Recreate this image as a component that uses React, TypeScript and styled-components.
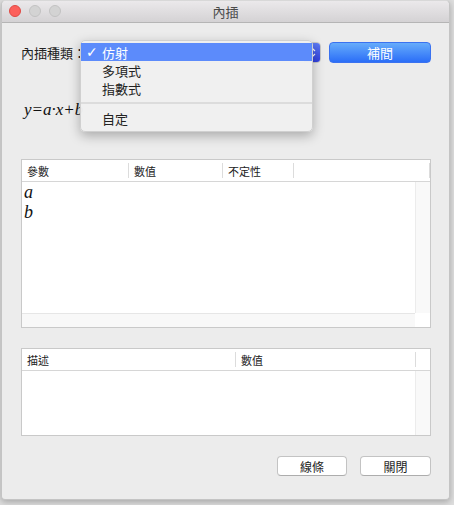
import React from "react";
import styled, { createGlobalStyle } from "styled-components";

const Global = createGlobalStyle`
  html, body { margin: 0; padding: 0; }
  body {
    background: #dedede;
    width: 454px;
    height: 505px;
    overflow: hidden;
    font-family: "Noto Sans CJK TC", "Noto Sans", sans-serif;
  }
`;

const CJK = `"Noto Sans CJK TC", "Noto Sans", sans-serif`;

const Window = styled.div`
  margin: 0 0 0 1px;
  width: 449px;
  height: 500px;
  box-sizing: border-box;
  background: #ececec;
  border: 1px solid #c4c4c4;
  border-top-color: #d8d8d8;
  border-radius: 5px 5px 4px 4px;
  box-shadow: 0 2px 6px rgba(0, 0, 0, 0.25);
  display: flex;
  flex-direction: column;
  overflow: hidden;
`;

const TitleBar = styled.div`
  height: 22px;
  flex: none;
  box-sizing: border-box;
  background: linear-gradient(#ebe9eb, #d4d2d4);
  border-bottom: 1px solid #b5b5b5;
  position: relative;
  display: flex;
  align-items: center;
  justify-content: center;
  font-family: ${CJK};
  font-size: 13px;
  color: #4a4a4a;
`;

const Lights = styled.div`
  position: absolute;
  left: 7px;
  top: 4px;
  display: flex;
  gap: 8px;
`;

const Light = styled.span<{ $color: string; $border: string }>`
  width: 12px;
  height: 12px;
  border-radius: 50%;
  box-sizing: border-box;
  background: ${(p) => p.$color};
  border: 1px solid ${(p) => p.$border};
`;

const Content = styled.div`
  flex: 1;
  display: flex;
  flex-direction: column;
  padding: 19px 18px 0 19px;
`;

const TopRow = styled.div`
  position: relative;
  display: flex;
  align-items: center;
  height: 21px;
`;

const Label = styled.span`
  width: 65px;
  font-family: ${CJK};
  font-size: 13px;
  color: #222;
  white-space: nowrap;
`;

const Popup = styled.div`
  flex: 1;
  height: 21px;
  box-sizing: border-box;
  background: #fff;
  border-radius: 4px;
  border: 1px solid #c8c8c8;
  display: flex;
  justify-content: flex-end;
  overflow: hidden;
`;

const PopupCap = styled.div`
  width: 16px;
  background: linear-gradient(#5d7bf4, #3140e0);
  display: flex;
  align-items: center;
  justify-content: center;
`;

const BlueButton = styled.button`
  margin-left: 8px;
  width: 102px;
  height: 21px;
  border: 1px solid #3a72f0;
  border-radius: 4px;
  background: linear-gradient(#66acfb, #2b6ef7);
  color: #fff;
  font-family: ${CJK};
  font-size: 13px;
  padding: 0;
`;

const Menu = styled.div`
  position: absolute;
  left: 59px;
  top: -2px;
  width: 233px;
  box-sizing: border-box;
  padding: 2px 0 4px;
  background: rgba(240, 240, 240, 0.98);
  border: 1px solid #d0d0d0;
  border-radius: 5px;
  box-shadow: 0 4px 12px rgba(0, 0, 0, 0.28);
  z-index: 2;
`;

const MenuItem = styled.div<{ $active?: boolean }>`
  position: relative;
  height: 18px;
  padding-left: 21px;
  display: flex;
  align-items: center;
  font-family: ${CJK};
  font-size: 13px;
  color: ${(p) => (p.$active ? "#fff" : "#222")};
  background: ${(p) => (p.$active ? "#5c8bfb" : "transparent")};
`;

const Check = styled.span`
  position: absolute;
  left: 5px;
  font-family: "DejaVu Sans", sans-serif;
  font-size: 14px;
  font-weight: bold;
`;

const Separator = styled.div`
  height: 2px;
  margin: 5px 0;
  background: #dcdcdc;
`;

const Formula = styled.div`
  margin-top: 36px;
  padding-left: 3px;
  height: 22px;
  line-height: 22px;
  font-family: "Liberation Serif", serif;
  font-style: italic;
  font-size: 17px;
  color: #111;
`;

const Spacer = styled.div<{ $h: number }>`
  height: ${(p) => p.$h}px;
  flex: none;
`;

const Table = styled.div<{ $height: number }>`
  height: ${(p) => p.$height}px;
  flex: none;
  box-sizing: border-box;
  border: 1px solid #c9c9c9;
  background: #fff;
  display: flex;
  flex-direction: column;
`;

const Header = styled.div`
  height: 22px;
  flex: none;
  box-sizing: border-box;
  border-bottom: 1px solid #d6d6d6;
  display: flex;
  background: #fff;
`;

const HeadCell = styled.div<{ $w?: number; $last?: boolean }>`
  ${(p) => (p.$w ? `width: ${p.$w}px;` : "flex: 1;")}
  flex-shrink: 0;
  box-sizing: border-box;
  padding-left: 5px;
  display: flex;
  align-items: center;
  font-family: ${CJK};
  font-size: 11px;
  color: #222;
  position: relative;
  &::after {
    content: "";
    position: absolute;
    right: 0;
    top: 3px;
    bottom: 3px;
    width: 1px;
    background: ${(p) => (p.$last ? "transparent" : "#dcdcdc")};
  }
`;

const Body = styled.div<{ $hscroll?: boolean }>`
  flex: 1;
  display: grid;
  grid-template-columns: 1fr 15px;
  grid-template-rows: ${(p) => (p.$hscroll ? "1fr 14px" : "1fr")};
  min-height: 0;
`;

const Rows = styled.div`
  display: flex;
  flex-direction: column;
`;

const Row = styled.div`
  height: 20px;
  padding-left: 2px;
  display: flex;
  align-items: center;
  font-family: "Liberation Serif", serif;
  font-style: italic;
  font-size: 18px;
  color: #111;
`;

const VTrack = styled.div`
  background: #f9f9f9;
  border-left: 1px solid #ececec;
`;

const HTrack = styled.div`
  background: #f8f8f8;
  border-top: 1px solid #e6e6e6;
`;

const Corner = styled.div`
  background: #fff;
`;

const Footer = styled.div`
  margin-top: 20px;
  display: flex;
  justify-content: flex-end;
  gap: 13px;
`;

const PlainButton = styled.button<{ $w: number }>`
  width: ${(p) => p.$w}px;
  height: 20px;
  padding: 0;
  background: #fff;
  border: 1px solid #c3c3c3;
  border-bottom-color: #adadad;
  border-radius: 4px;
  font-family: ${CJK};
  font-size: 12px;
  color: #222;
`;

const Chevrons = () => (
  <svg width="7" height="11" viewBox="0 0 7 11">
    <path d="M1 4 L3.5 1.5 L6 4 M1 7 L3.5 9.5 L6 7" stroke="#fff" strokeWidth="1.2" fill="none" />
  </svg>
);

export default function App() {
  return (
    <>
      <Global />
      <Window>
        <TitleBar>
          <Lights>
            <Light $color="#fc605b" $border="#de4a45" />
            <Light $color="#d3d3d3" $border="#c2c2c2" />
            <Light $color="#d3d3d3" $border="#c2c2c2" />
          </Lights>
          內插
        </TitleBar>
        <Content>
          <TopRow>
            <Label>內插種類：</Label>
            <Popup>
              <PopupCap>
                <Chevrons />
              </PopupCap>
            </Popup>
            <BlueButton>補間</BlueButton>
            <Menu>
              <MenuItem $active>
                <Check>✓</Check>仿射
              </MenuItem>
              <MenuItem>多項式</MenuItem>
              <MenuItem>指數式</MenuItem>
              <Separator />
              <MenuItem>自定</MenuItem>
            </Menu>
          </TopRow>
          <Formula>y=a·x+b</Formula>
          <Spacer $h={38} />
          <Table $height={169}>
            <Header>
              <HeadCell $w={107}>參數</HeadCell>
              <HeadCell $w={94}>數值</HeadCell>
              <HeadCell $w={71}>不定性</HeadCell>
              <HeadCell />
            </Header>
            <Body $hscroll>
              <Rows>
                <Row>a</Row>
                <Row>b</Row>
              </Rows>
              <VTrack />
              <HTrack />
              <Corner />
            </Body>
          </Table>
          <Spacer $h={20} />
          <Table $height={88}>
            <Header>
              <HeadCell $w={214}>描述</HeadCell>
              <HeadCell $w={180}>數值</HeadCell>
              <HeadCell $last />
            </Header>
            <Body>
              <Rows />
              <VTrack />
            </Body>
          </Table>
          <Footer>
            <PlainButton $w={70}>線條</PlainButton>
            <PlainButton $w={71}>關閉</PlainButton>
          </Footer>
        </Content>
      </Window>
    </>
  );
}
